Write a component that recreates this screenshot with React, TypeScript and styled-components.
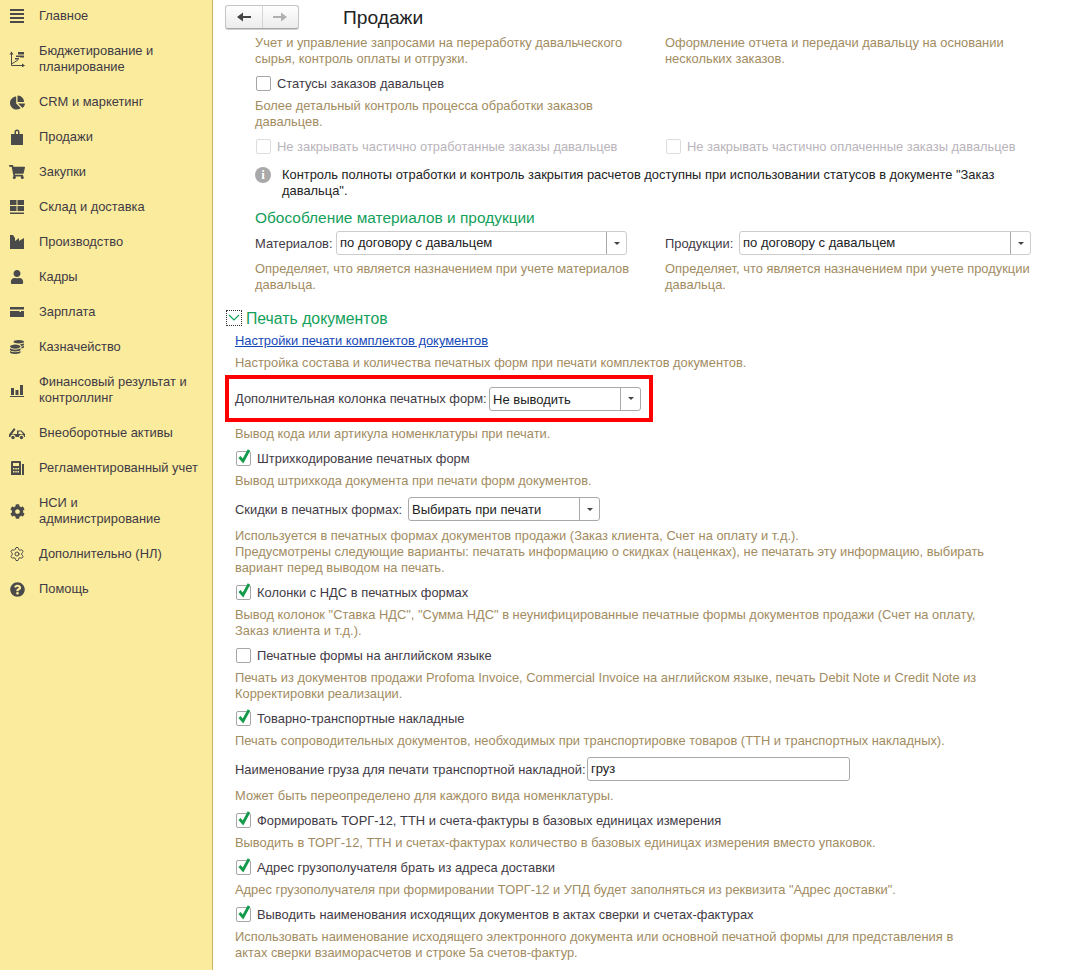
import React from "react";
import styled, { createGlobalStyle } from "styled-components";
import { FaChartPie, FaCog, FaCoins, FaQuestionCircle, FaShoppingCart, FaUser } from "react-icons/fa";
import { Settings } from "lucide-react";

const GlobalStyle = createGlobalStyle`
  html, body {
    margin: 0;
    padding: 0;
    height: 100%;
    background: #ffffff;
    font-family: "Liberation Sans", Arial, sans-serif;
    font-size: 12.9px;
  }
`;

const Shell = styled.div`
  display: flex;
  width: 1087px;
  height: 970px;
  overflow: hidden;
`;

const Sidebar = styled.nav`
  flex: 0 0 212px;
  background: #fbec9d;
  border-right: 1px solid #c6b566;
  overflow: hidden;
`;

const NavList = styled.div`
  display: flex;
  flex-direction: column;
  margin-top: -1.5px;
`;

const NavItem = styled.div<{ $tall?: boolean }>`
  display: flex;
  align-items: center;
  height: ${(p) => (p.$tall ? 51 : 35)}px;
  padding-left: 9px;
  color: #3f3a45;
  line-height: 16px;
`;

const NavIcon = styled.span`
  flex: 0 0 16px;
  height: 16px;
  margin-right: 14px;
  display: flex;
  align-items: center;
  justify-content: center;
  color: #4a4a4a;
`;

const Main = styled.main`
  flex: 1;
  min-width: 0;
  display: flex;
  flex-direction: column;
  padding-left: 12px;
`;

const TopBar = styled.header`
  flex: 0 0 37px;
  display: flex;
  align-items: flex-start;
  gap: 44px;
  padding-top: 5px;
  box-sizing: border-box;
`;

const NavButtons = styled.div`
  display: flex;
  width: 74px;
  height: 24px;
  box-sizing: border-box;
  border: 1px solid #c4c4c4;
  border-bottom-color: #a8a8a8;
  border-radius: 3px;
  background: linear-gradient(#ffffff, #ececec);
  box-shadow: 0 1px 0 #d0d0d0;
`;

const NavButton = styled.button<{ $divider?: boolean }>`
  flex: 1;
  padding: 0;
  border: none;
  background: none;
  display: flex;
  align-items: center;
  justify-content: center;
  ${(p) => p.$divider && "border-right: 1px solid #d4d4d4;"}
`;

const Title = styled.h1`
  margin: 0;
  font-size: 19.2px;
  line-height: 26px;
  font-weight: 400;
  color: #222222;
`;

const Content = styled.div`
  flex: 1;
  overflow: hidden;
`;

const Indented = styled.div`
  padding-left: 30px;
`;

const Columns = styled.div<{ $mt?: number }>`
  display: grid;
  grid-template-columns: 410px 1fr;
  margin-top: ${(p) => p.$mt ?? 0}px;
`;

const Body = styled.div`
  padding-left: 10px;
`;

const Help = styled.p<{ $mt?: number }>`
  margin: ${(p) => p.$mt ?? 7}px 0 0;
  font-size: 12.9px;
  line-height: 16px;
  color: #a28c5f;
  white-space: nowrap;
`;

const CheckRow = styled.label<{ $mt?: number; $off?: boolean }>`
  display: flex;
  align-items: center;
  height: 16px;
  margin-top: ${(p) => p.$mt ?? 8}px;
  color: ${(p) => (p.$off ? "#b9b4bb" : "#3f3a45")};
  white-space: nowrap;
`;

const Box = styled.span<{ $off?: boolean }>`
  position: relative;
  flex: 0 0 15px;
  height: 15px;
  margin: 0 6px 0 1px;
  border: 1px solid ${(p) => (p.$off ? "#dddddd" : "#a6a6a6")};
  border-radius: 2px;
  box-sizing: border-box;
  background: #ffffff;
`;

const Tick = styled.svg`
  position: absolute;
  left: 0;
  top: -4px;
`;

const FieldRow = styled.div<{ $mt?: number }>`
  display: flex;
  align-items: center;
  height: 24px;
  margin-top: ${(p) => p.$mt ?? 8}px;
  color: #3f3a45;
  white-space: nowrap;
`;

const FieldLabel = styled.span<{ $w: number }>`
  flex: 0 0 ${(p) => p.$w}px;
`;

const Select = styled.div<{ $w: number; $strong?: boolean }>`
  display: flex;
  align-items: stretch;
  width: ${(p) => p.$w}px;
  height: 24px;
  box-sizing: border-box;
  border: 1px solid ${(p) => (p.$strong ? "#a9a9a9" : "#cccccc")};
  border-radius: 3px;
  background: #ffffff;
  color: #222222;
  font-size: 13px;
`;

const SelectValue = styled.span<{ $strong?: boolean }>`
  flex: 1;
  padding-left: 3px;
  line-height: ${(p) => (p.$strong ? 24 : 22)}px;
`;

const SelectArrow = styled.span`
  flex: 0 0 19px;
  border-left: 1px solid #a9a9a9;
  display: flex;
  align-items: center;
  justify-content: center;
  &::after {
    content: "";
    border-left: 3px solid transparent;
    border-right: 3px solid transparent;
    border-top: 3px solid #444444;
  }
`;

const TextInput = styled.div`
  width: 263px;
  height: 24px;
  box-sizing: border-box;
  border: 1px solid #a9a9a9;
  border-radius: 3px;
  padding-left: 3px;
  line-height: 22px;
  color: #222222;
  font-size: 13px;
`;

const InfoRow = styled.div`
  display: flex;
  margin-top: 13px;
  color: #222222;
  line-height: 16px;
  white-space: nowrap;
`;

const InfoIcon = styled.span`
  flex: 0 0 16px;
  height: 16px;
  margin-right: 11px;
  border-radius: 50%;
  background: #a9a9a9;
  color: #ffffff;
  font-family: "Liberation Serif", serif;
  font-weight: 700;
  font-size: 13px;
  line-height: 16px;
  text-align: center;
`;

const GroupTitle = styled.h3`
  margin: 8px 0 0;
  height: 20px;
  font-size: 15.45px;
  line-height: 22px;
  font-weight: 400;
  color: #13a05a;
`;

const CollapseHead = styled.div`
  display: flex;
  align-items: center;
  height: 16px;
  margin: 17px 0 0 1px;
  gap: 4px;
`;

const CollapseToggle = styled.span`
  flex: 0 0 16px;
  height: 16px;
  box-sizing: border-box;
  border: 1px dotted #333333;
  display: flex;
  align-items: center;
  justify-content: center;
`;

const CollapseTitle = styled.span`
  font-size: 15.8px;
  padding-top: 2px;
  color: #13a05a;
`;

const DocLink = styled.a`
  display: block;
  margin-top: 7px;
  line-height: 16px;
  color: #1549b8;
  text-decoration: underline;
`;

const Highlight = styled.div`
  width: 428px;
  height: 47px;
  margin: 4px 0 0 -10px;
  padding-left: 6px;
  box-sizing: border-box;
  border: 4px solid #ff0000;
  display: flex;
  align-items: center;
`;

const Dropdown = ({ w, strong, children }: { w: number; strong?: boolean; children: React.ReactNode }) => (
  <Select $w={w} $strong={strong}>
    <SelectValue $strong={strong}>{children}</SelectValue>
    <SelectArrow />
  </Select>
);

const Check = ({ mt, off, checked, children }: { mt?: number; off?: boolean; checked?: boolean; children: React.ReactNode }) => (
  <CheckRow $mt={mt} $off={off}>
    <Box $off={off}>
      {checked && (
        <Tick width="15" height="16" viewBox="0 0 15 16">
          <path d="M2.500 9 L6 13 L12 2" fill="none" stroke="#149a4b" strokeWidth="2.8" />
        </Tick>
      )}
    </Box>
    {children}
  </CheckRow>
);

const ic = { width: 16, height: 16, viewBox: "0 0 16 16", fill: "currentColor" };

const navItems: { label: React.ReactNode; tall?: boolean; icon: React.ReactNode }[] = [
  {
    label: "Главное",
    icon: (
      <svg {...ic}>
        <path d="M1 2h14v2H1zM1 6h14v2H1zM1 10h14v2H1zM1 14h14v2H1z" transform="translate(0 -1)" />
      </svg>
    ),
  },
  {
    label: <>Бюджетирование и<br />планирование</>,
    tall: true,
    icon: (
      <svg {...ic}>
        <path d="M2.500 2v12.500H15" fill="none" stroke="currentColor" />
        <path d="M2.500 13L9 9" fill="none" stroke="currentColor" />
        <path d="M0.500 3.500l2-3 2 3zM13 12.500l3 2-3 2z" />
        <path d="M6 7h4v1.500H6zM7 4.500h5V6H7zM9 1h6v2.500H9zM11 4.500h4v2h-4z" />
      </svg>
    ),
  },
  { label: "CRM и маркетинг", icon: <FaChartPie size={15} /> },
  {
    label: "Продажи",
    icon: (
      <svg {...ic}>
        <path d="M2 5h3.500V3a2.500 2.500 0 0 1 5 0v2H14v11H2z M7 5h2V3a1 1 0 0 0-2 0z" fillRule="evenodd" />
      </svg>
    ),
  },
  { label: "Закупки", icon: <FaShoppingCart size={16} /> },
  {
    label: "Склад и доставка",
    icon: (
      <svg {...ic}>
        <path d="M1 1h6.500v5H1zM8.500 1H15v5H8.500zM1 7h6.500v5H1zM8.500 7H15v5H8.500zM1 13.500h14V15H1z" />
      </svg>
    ),
  },
  {
    label: "Производство",
    icon: (
      <svg {...ic}>
        <path d="M1 15V1h3l2 3v3l4-3v3l5-3v11z" />
      </svg>
    ),
  },
  { label: "Кадры", icon: <FaUser size={14} /> },
  {
    label: "Зарплата",
    icon: (
      <svg {...ic}>
        <path d="M1 3h14v2.500H1zM1 7h9.500v1H12V7h3v6H1z" />
      </svg>
    ),
  },
  { label: "Казначейство", icon: <FaCoins size={14} /> },
  {
    label: <>Финансовый результат и<br />контроллинг</>,
    tall: true,
    icon: (
      <svg {...ic}>
        <path d="M2 6h3v7H2zM6.500 8h3v5h-3zM11 3h3v10h-3zM1 14h14v1H1z" />
      </svg>
    ),
  },
  {
    label: "Внеоборотные активы",
    icon: (
      <svg {...ic}>
        <path d="M0 12V9.500L5 3l1.500 1.500L3 9h5V5.500h4.500L16 9v3h-1a2.500 2.500 0 0 0-5 0H6.500a2.500 2.500 0 0 0-5 0z M9.500 6.500V9h4.500l-2-2.500z" fillRule="evenodd" />
        <circle cx="4" cy="12.500" r="1.700" />
        <circle cx="12.500" cy="12.500" r="1.700" />
      </svg>
    ),
  },
  {
    label: "Регламентированный учет",
    icon: (
      <svg {...ic}>
        <path
          fillRule="evenodd"
          d="M2 2a1 1 0 0 1 1-1h8a1 1 0 0 1 1 1v13H2zM4 3v3h6V3zM4 8v1.500h1.500V8zM6.300 8v1.500h1.500V8zM8.500 8v1.500H10V8zM4 11v1.500h1.500V11zM6.300 11v1.500h1.500V11zM8.500 11v1.500H10V11zM13 4h2v11h-2z"
        />
      </svg>
    ),
  },
  { label: <>НСИ и<br />администрирование</>, tall: true, icon: <FaCog size={15} /> },
  { label: "Дополнительно (НЛ)", icon: <Settings size={16} strokeWidth={1.5} /> },
  { label: "Помощь", icon: <FaQuestionCircle size={15} /> },
];

export default function App() {
  return (
    <Shell>
      <GlobalStyle />
      <Sidebar>
        <NavList>
          {navItems.map((item, i) => (
            <NavItem key={i} $tall={item.tall}>
              <NavIcon>{item.icon}</NavIcon>
              <span>{item.label}</span>
            </NavItem>
          ))}
        </NavList>
      </Sidebar>
      <Main>
        <TopBar>
          <NavButtons>
            <NavButton $divider>
              <svg width="14" height="10" viewBox="0 0 14 10">
                <path d="M0 5l6-4.500V4h8v2H6v3.500z" fill="#444444" />
              </svg>
            </NavButton>
            <NavButton>
              <svg width="14" height="10" viewBox="0 0 14 10">
                <path d="M14 5L8 .5V4H0v2h8v3.500z" fill="#b0b0b0" />
              </svg>
            </NavButton>
          </NavButtons>
          <Title>Продажи</Title>
        </TopBar>
        <Content>
          <Indented>
            <Columns $mt={-2}>
              <Help $mt={0}>
                Учет и управление запросами на переработку давальческого
                <br />
                сырья, контроль оплаты и отгрузки.
              </Help>
              <Help $mt={0}>
                Оформление отчета и передачи давальцу на основании
                <br />
                нескольких заказов.
              </Help>
            </Columns>
            <Check mt={8}>Статусы заказов давальцев</Check>
            <Help $mt={7}>
              Более детальный контроль процесса обработки заказов
              <br />
              давальцев.
            </Help>
            <Columns $mt={8}>
              <Check mt={0} off>Не закрывать частично отработанные заказы давальцев</Check>
              <Check mt={0} off>Не закрывать частично оплаченные заказы давальцев</Check>
            </Columns>
            <InfoRow>
              <InfoIcon>i</InfoIcon>
              <span>
                Контроль полноты отработки и контроль закрытия расчетов доступны при использовании статусов в документе "Заказ
                <br />
                давальца".
              </span>
            </InfoRow>
            <GroupTitle>Обособление материалов и продукции</GroupTitle>
            <Columns $mt={4}>
              <FieldRow $mt={0}>
                <FieldLabel $w={81}>Материалов:</FieldLabel>
                <Dropdown w={291}>по договору с давальцем</Dropdown>
              </FieldRow>
              <FieldRow $mt={0}>
                <FieldLabel $w={74}>Продукции:</FieldLabel>
                <Dropdown w={292}>по договору с давальцем</Dropdown>
              </FieldRow>
            </Columns>
            <Columns>
              <Help $mt={6}>
                Определяет, что является назначением при учете материалов
                <br />
                давальца.
              </Help>
              <Help $mt={6}>
                Определяет, что является назначением при учете продукции
                <br />
                давальца.
              </Help>
            </Columns>
          </Indented>
          <CollapseHead>
            <CollapseToggle>
              <svg width="12" height="8" viewBox="0 0 12 8">
                <path d="M1 1l5 5 5-5" fill="none" stroke="#13a05a" strokeWidth="1.2" />
              </svg>
            </CollapseToggle>
            <CollapseTitle>Печать документов</CollapseTitle>
          </CollapseHead>
          <Body>
            <DocLink href="#">Настройки печати комплектов документов</DocLink>
            <Help $mt={6}>Настройка состава и количества печатных форм при печати комплектов документов.</Help>
            <Highlight>
              <FieldRow $mt={0}>
                <FieldLabel $w={254}>Дополнительная колонка печатных форм:</FieldLabel>
                <Dropdown w={152} strong>Не выводить</Dropdown>
              </FieldRow>
            </Highlight>
            <Help $mt={4}>Вывод кода или артикула номенклатуры при печати.</Help>
            <Check checked>Штрихкодирование печатных форм</Check>
            <Help>Вывод штрихкода документа при печати форм документов.</Help>
            <FieldRow>
              <FieldLabel $w={173}>Скидки в печатных формах:</FieldLabel>
              <Dropdown w={192} strong>Выбирать при печати</Dropdown>
            </FieldRow>
            <Help>
              Используется в печатных формах документов продажи (Заказ клиента, Счет на оплату и т.д.).
              <br />
              Предусмотрены следующие варианты: печатать информацию о скидках (наценках), не печатать эту информацию, выбирать
              <br />
              вариант перед выводом на печать.
            </Help>
            <Check checked>Колонки с НДС в печатных формах</Check>
            <Help>
              Вывод колонок "Ставка НДС", "Сумма НДС" в неунифицированные печатные формы документов продажи (Счет на оплату,
              <br />
              Заказ клиента и т.д.).
            </Help>
            <Check>Печатные формы на английском языке</Check>
            <Help>
              Печать из документов продажи Profoma Invoice, Commercial Invoice на английском языке, печать Debit Note и Credit Note из
              <br />
              Корректировки реализации.
            </Help>
            <Check checked>Товарно-транспортные накладные</Check>
            <Help>Печать сопроводительных документов, необходимых при транспортировке товаров (ТТН и транспортных накладных).</Help>
            <FieldRow>
              <FieldLabel $w={352}>Наименование груза для печати транспортной накладной:</FieldLabel>
              <TextInput>груз</TextInput>
            </FieldRow>
            <Help>Может быть переопределено для каждого вида номенклатуры.</Help>
            <Check checked>Формировать ТОРГ-12, ТТН и счета-фактуры в базовых единицах измерения</Check>
            <Help>Выводить в ТОРГ-12, ТТН и счетах-фактурах количество в базовых единицах измерения вместо упаковок.</Help>
            <Check checked>Адрес грузополучателя брать из адреса доставки</Check>
            <Help>Адрес грузополучателя при формировании ТОРГ-12 и УПД будет заполняться из реквизита "Адрес доставки".</Help>
            <Check checked>Выводить наименования исходящих документов в актах сверки и счетах-фактурах</Check>
            <Help>
              Использовать наименование исходящего электронного документа или основной печатной формы для представления в
              <br />
              актах сверки взаиморасчетов и строке 5а счетов-фактур.
            </Help>
          </Body>
        </Content>
      </Main>
    </Shell>
  );
}
